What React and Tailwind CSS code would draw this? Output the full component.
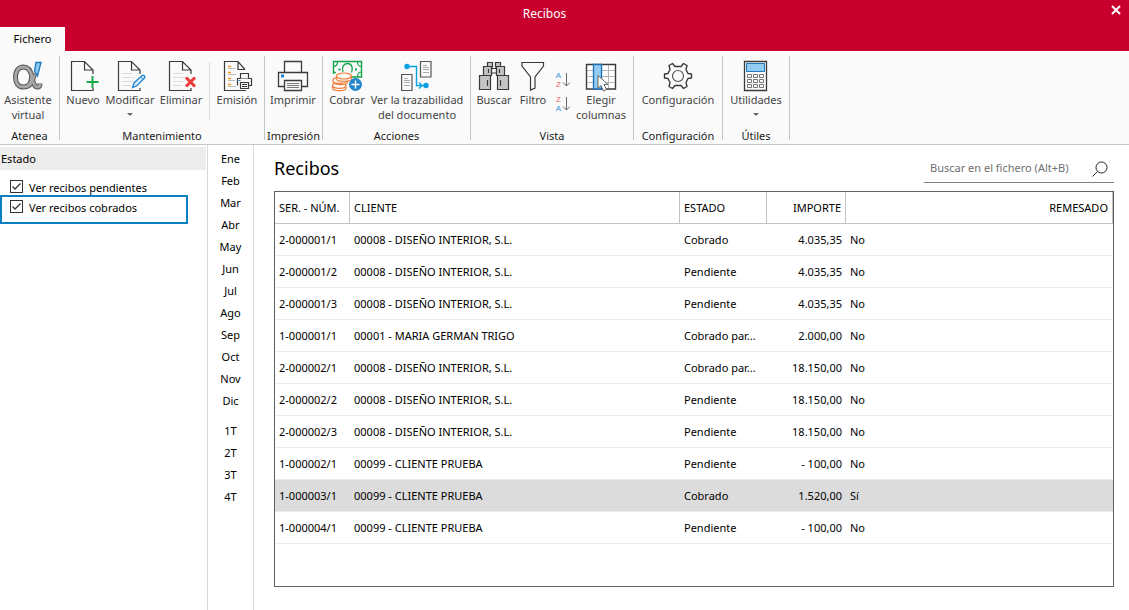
import clsx from "clsx";

const INK = "#3a3a3a";

const MONTHS = ["Ene", "Feb", "Mar", "Abr", "May", "Jun", "Jul", "Ago", "Sep", "Oct", "Nov", "Dic"];
const QUARTERS = ["1T", "2T", "3T", "4T"];

const RECEIPTS = [
  { id: "2-000001/1", client: "00008 - DISEÑO INTERIOR, S.L.", status: "Cobrado", amount: "4.035,35", remitted: "No" },
  { id: "2-000001/2", client: "00008 - DISEÑO INTERIOR, S.L.", status: "Pendiente", amount: "4.035,35", remitted: "No" },
  { id: "2-000001/3", client: "00008 - DISEÑO INTERIOR, S.L.", status: "Pendiente", amount: "4.035,35", remitted: "No" },
  { id: "1-000001/1", client: "00001 - MARIA GERMAN TRIGO", status: "Cobrado par...", amount: "2.000,00", remitted: "No" },
  { id: "2-000002/1", client: "00008 - DISEÑO INTERIOR, S.L.", status: "Cobrado par...", amount: "18.150,00", remitted: "No" },
  { id: "2-000002/2", client: "00008 - DISEÑO INTERIOR, S.L.", status: "Pendiente", amount: "18.150,00", remitted: "No" },
  { id: "2-000002/3", client: "00008 - DISEÑO INTERIOR, S.L.", status: "Pendiente", amount: "18.150,00", remitted: "No" },
  { id: "1-000002/1", client: "00099 - CLIENTE PRUEBA", status: "Pendiente", amount: "- 100,00", remitted: "No" },
  { id: "1-000003/1", client: "00099 - CLIENTE PRUEBA", status: "Cobrado", amount: "1.520,00", remitted: "Sí", selected: true },
  { id: "1-000004/1", client: "00099 - CLIENTE PRUEBA", status: "Pendiente", amount: "- 100,00", remitted: "No" },
];

function Icon({ children }) {
  return (
    <svg viewBox="0 0 32 32" className="size-8 shrink-0" fill="none" stroke={INK} aria-hidden="true">
      {children}
    </svg>
  );
}

function AlphaIcon() {
  const bowl = "M19.5 17C19.5 24 16.500 27 11.500 27C6.500 27 3.500 23 3.500 17.500C3.500 11 6.500 7 11.500 7C17 7 19 12 20 17C21 23 22.500 27 25.500 27C27.500 27 28 25.500 28 23.500";
  const arm = "M23 13C22 19 20 24 17 26";
  return (
    <Icon>
      <path d={bowl} stroke="#555" strokeWidth="5" />
      <path d={arm} stroke="#555" strokeWidth="4" />
      <path d={bowl} stroke="#a6a6a6" strokeWidth="3" />
      <path d={arm} stroke="#a6a6a6" strokeWidth="2" />
      <path d="M24 2.5H29L25.5 16L22.5 11Z" fill="#8ec8f0" stroke="#1f77bd" strokeWidth="1.3" />
    </Icon>
  );
}

// Sheet with a folded corner, left edge at x = 4.5
function Sheet({ lines }) {
  return (
    <>
      {lines && <path d="M8 13.5H18M8 17.5H21M8 21.5H19M8 25.5H17" stroke="#dcdcdc" />}
      <path d="M26 14V10L17.5 1.5H4.5V30.5H26V28M17.5 1.5V10H26" strokeWidth="1.2" />
    </>
  );
}

function NewIcon() {
  return (
    <Icon>
      <Sheet />
      <path d="M25.5 16V28M19.5 22H31.5" stroke="#17a84b" strokeWidth="2" />
    </Icon>
  );
}

function EditIcon() {
  return (
    <Icon>
      <Sheet lines />
      <path d="M18.5 27.5L20 23L28 15.5C29.5 14.5 31.5 16.5 30.5 18L22.5 26Z" fill="#d9eefb" stroke="#2b8bd0" strokeWidth="1.4" />
      <path d="M27 17L29 19.5" stroke="#2b8bd0" />
    </Icon>
  );
}

function DeleteIcon() {
  return (
    <Icon>
      <Sheet lines />
      <path d="M21 17.5L30 26.5M30 17.5L21 26.5" stroke="#ee3a3a" strokeWidth="3" />
    </Icon>
  );
}

function IssueIcon() {
  return (
    <Icon>
      <path d="M24 9.5L17 1.5H3.5V30.5H25M17 1.5V9.5H24" strokeWidth="1.2" />
      <path d="M7 6.5H10M7 12.5H10M7 18.5H10M7 24.5H10" stroke="#f39a1e" strokeWidth="1.3" />
      <path d="M7 8.5H14M7 14.5H15M7 20.5H14M7 26.5H15" stroke="#bdbdbd" />
      <path d="M16.5 25.5V18.5H30.5V25.5H28" fill="#fafafa" strokeWidth="1.2" />
      <path d="M19.5 18.5V13.5H27.5V18.5" fill="#fafafa" strokeWidth="1.2" />
      <path d="M19.5 22.5H27.5V28.5H19.5ZM21 24.5H26M21 26.5H26" fill="#fafafa" strokeWidth="1.2" />
      <path d="M17.5 20.5H19.5" stroke="#1e87cf" />
    </Icon>
  );
}

function PrintIcon() {
  return (
    <Icon>
      <path d="M7.5 12V1.5H24.5V12M7 26.5H1.5V12.5H30.5V26.5H25" strokeWidth="1.3" />
      <path d="M7.5 20.5H24.5V30.5H7.5Z" strokeWidth="1.3" />
      <path d="M10 23.5H22M10 25.5H22M10 27.5H22" stroke="#777" />
      <path d="M4 14.5H7V17.5H4Z" fill="#1e87cf" stroke="none" />
    </Icon>
  );
}

function CollectIcon() {
  return (
    <Icon>
      <path d="M2.5 14V1.5H30.5V17H20" stroke="#12a34a" strokeWidth="1.4" />
      <path
        d="M2.5 6.5C5 6.5 6.5 4.5 6.5 2M26.5 2C26.5 4.5 28 6.5 30.5 6.5M30.5 12C28 12 26.5 14 26.5 17M2.5 11.5L5 13"
        stroke="#12a34a"
        strokeWidth="1.2"
      />
      <path d="M12 12C10.5 7 12.5 3.5 16.5 3.5C20.5 3.5 22.5 7.5 20.5 12.5" stroke="#12a34a" strokeWidth="1.3" />
      <path d="M7.5 9.5H9.5M24 9.5H26" stroke="#12a34a" strokeWidth="2" />
      <g fill="#fafafa" stroke="#ee7d3b" strokeWidth="1.2">
        <path d="M1.5 26V28C1.5 31.5 15 31.5 15 28V26" />
        <ellipse cx="8.2" cy="25.5" rx="6.7" ry="2.8" />
        <path d="M3 20V22C3 25.5 16.5 25.5 16.5 22V20" />
        <ellipse cx="8.5" cy="20.5" rx="6.7" ry="2.8" />
        <path d="M5.5 16V19C5.5 22 20.5 22 20.5 19V16" />
        <ellipse cx="13" cy="16" rx="7.5" ry="3" />
      </g>
      <circle cx="24.5" cy="24.5" r="6.5" fill="#2387cb" stroke="none" />
      <path d="M24.5 20.5V28.5M20.5 24.5H28.5" stroke="#fff" strokeWidth="1.4" />
    </Icon>
  );
}

function TraceIcon() {
  return (
    <Icon>
      <g stroke="#555" strokeWidth="1.2">
        <path d="M19.5 1.5H30V17H19.5ZM0.6 14.5H11V30.5H0.6Z" />
        <path
          d="M22 5.5H26M22 7.5H28M22 9.5H28M22 12.5H28M3 18.5H7M3 20.5H9M3 22.5H9M3 25.5H9"
          stroke="#aaa"
          strokeWidth="1"
        />
      </g>
      <path d="M6 6.5H15.5V25.5H24M18 22.5L21 25.5L18 28.5" stroke="#0a9fe0" strokeWidth="1.4" />
      <circle cx="6" cy="6.5" r="2.7" fill="#0a9fe0" stroke="none" />
      <circle cx="25" cy="25.5" r="2.7" fill="#0a9fe0" stroke="none" />
    </Icon>
  );
}

function BinocularsIcon() {
  return (
    <Icon>
      <g fill="#c4c4c4" strokeWidth="1.2">
        <path d="M9.5 2.5H14.5V7H9.5ZM17.5 2.5H22.5V7H17.5Z" />
        <path d="M13.5 8.5H18.5V13H13.5Z" fill="#fafafa" />
        <path d="M5.5 6.5H13.5V15.5H5.5ZM18.5 6.5H26.5V15.5H18.5Z" />
        <path d="M1.5 15.5H12.5V29.5H1.5ZM19.5 15.5H30.5V29.5H19.5Z" />
      </g>
      <path d="M9.5 20V26M22.5 20V26M10.5 9V13M21.5 9V13" strokeWidth="1.2" />
    </Icon>
  );
}

function FilterIcon() {
  return (
    <Icon>
      <path d="M5 2.5H26.5V6L18 17V28L13.5 30V17L5 6Z" strokeWidth="1.2" />
    </Icon>
  );
}

function ColumnsIcon() {
  return (
    <Icon>
      <path d="M1.5 4.5H30.5V29H1.5Z" fill="#fff" strokeWidth="1.4" />
      <path d="M2 10.5H30M2 16.5H30M2 22.5H30M23.5 5V28" stroke="#b5b5b5" />
      <path d="M8.5 4.5H16.5V29H8.5Z" fill="#92cbf3" stroke="#1f6fb5" strokeWidth="1.3" />
      <path d="M13 15.5V28L16 25.5L18.5 31L21.5 29.5L19 24.5H23Z" fill="#fff" stroke="#666" />
    </Icon>
  );
}

function GearIcon() {
  return (
    <Icon>
      <path
        d="M6 13.5L8 9.5L7 5.5L10.5 3.5L13 6.5H19L21.5 3.5L25 5.5L24 9.5L26 13.5L29.5 14V18L26 18.5L24 22.5L25 26.5L21.5 28.5L19 25.5H13L10.5 28.5L7 26.5L8 22.5L6 18.5L2.5 18V14Z"
        strokeWidth="1.4"
        strokeLinejoin="round"
      />
      <circle cx="16" cy="16" r="5.5" stroke="#555" strokeWidth="1.2" />
    </Icon>
  );
}

function CalculatorIcon() {
  return (
    <Icon>
      <path d="M4.5 1.5H26.5V30.5H4.5Z" strokeWidth="1.3" />
      <path d="M6.5 3.5H24.5V11.5H6.5Z" fill="#92cbf3" stroke="#1f77bd" />
      <path
        d="M7.5 14.5H11.5V17.5H7.5ZM13.5 14.5H17.5V17.5H13.5ZM19.5 14.5H23.5V17.5H19.5ZM7.5 19.5H11.5V22.5H7.5ZM13.5 19.5H17.5V22.5H13.5ZM19.5 19.5H23.5V22.5H19.5ZM7.5 24.5H11.5V27.5H7.5ZM13.5 24.5H17.5V27.5H13.5ZM19.5 24.5H23.5V27.5H19.5Z"
        stroke="#777"
      />
    </Icon>
  );
}

function RibbonGroup({ title, children }) {
  return (
    <section className="flex h-[84px] flex-col justify-between border-r border-[#c6c6c6]">
      <div className="flex">{children}</div>
      <h2 className="text-center text-[11px] leading-2 whitespace-nowrap text-[#1a1a1a]">{title}</h2>
    </section>
  );
}

function RibbonButton({ icon, label, menu, className }) {
  return (
    <button
      type="button"
      className={clsx(
        "flex flex-col items-center pt-1 text-[11px] leading-[15px] whitespace-pre text-[#444]",
        className
      )}
    >
      {icon}
      <span>{label}</span>
      {menu && (
        <svg viewBox="0 0 6 3" className="mt-1.5 h-[3px] w-1.5" fill="#666" aria-hidden="true">
          <path d="M0 0H6L3 3Z" />
        </svg>
      )}
    </button>
  );
}

function SortButton({ first, last, label, flipped }) {
  return (
    <button type="button" aria-label={label} className="flex items-center gap-px">
      <span className="flex flex-col font-['Liberation_Sans',sans-serif] text-[8px] leading-[9px]">
        <span className={flipped ? "text-[#f06464]" : "text-[#3d97d8]"}>{first}</span>
        <span className={flipped ? "text-[#3d97d8]" : "text-[#f06464]"}>{last}</span>
      </span>
      <svg viewBox="0 0 8 16" className="h-4 w-2" fill="none" stroke="#666" aria-hidden="true">
        <path d="M4.5 1V14M1 10.5L4.5 14L8 10.5" />
      </svg>
    </button>
  );
}

function StatusFilter({ label, active }) {
  return (
    <label
      className={clsx(
        "flex items-start gap-1.5 border-2 pt-[3px] pl-2 text-[11px] leading-[15px]",
        active ? "mr-[19px] h-[29px] border-[#0a80c4]" : "h-5 border-transparent"
      )}
    >
      <span className="grid">
        <input
          type="checkbox"
          defaultChecked
          className="peer col-start-1 row-start-1 size-[13px] appearance-none border border-[#333] bg-white"
        />
        <svg
          viewBox="0 0 13 13"
          className="pointer-events-none invisible col-start-1 row-start-1 size-[13px] peer-checked:visible"
          fill="none"
          stroke="#333"
          strokeWidth="1.3"
          aria-hidden="true"
        >
          <path d="M2.5 6.5L5 9L10.5 3.5" />
        </svg>
      </span>
      {label}
    </label>
  );
}

function PeriodButton({ children }) {
  return (
    <button type="button" className="block h-[22px] w-full text-center text-[11px]">
      {children}
    </button>
  );
}

function Ribbon() {
  return (
    <div className="flex border-b border-[#c6c6c6] bg-[#fafafa] pt-[5px] pb-1">
      <RibbonGroup title="Atenea">
        <RibbonButton icon={<AlphaIcon />} label={"Asistente\nvirtual"} className="mr-[3px] w-14" />
      </RibbonGroup>
      <RibbonGroup title="Mantenimiento">
        <RibbonButton icon={<NewIcon />} label="Nuevo" className="w-[46px]" />
        <RibbonButton icon={<EditIcon />} label="Modificar" menu className="w-12" />
        <RibbonButton icon={<DeleteIcon />} label="Eliminar" className="mr-px w-[54px]" />
        <div className="mt-1.5 h-[59px] border-l border-[#dedede]" />
        <RibbonButton icon={<IssueIcon />} label="Emisión" className="w-[54px]" />
      </RibbonGroup>
      <RibbonGroup title="Impresión">
        <RibbonButton icon={<PrintIcon />} label="Imprimir" className="mr-px w-14" />
      </RibbonGroup>
      <RibbonGroup title="Acciones">
        <RibbonButton icon={<CollectIcon />} label="Cobrar" className="mr-px w-12" />
        <RibbonButton icon={<TraceIcon />} label={"Ver la trazabilidad\ndel documento"} className="mr-2 w-[90px]" />
      </RibbonGroup>
      <RibbonGroup title="Vista">
        <RibbonButton icon={<BinocularsIcon />} label="Buscar" className="w-[46px]" />
        <RibbonButton icon={<FilterIcon />} label="Filtro" className="w-8" />
        <div className="flex w-7 flex-col items-center gap-1.5 pt-[15px]">
          <SortButton first="A" last="Z" label="Orden ascendente" />
          <SortButton first="Z" last="A" label="Orden descendente" flipped />
        </div>
        <RibbonButton icon={<ColumnsIcon />} label={"Elegir\ncolumnas"} className="mr-2 w-12" />
      </RibbonGroup>
      <RibbonGroup title="Configuración">
        <RibbonButton icon={<GearIcon />} label="Configuración" className="w-[88px]" />
      </RibbonGroup>
      <RibbonGroup title="Útiles">
        <RibbonButton icon={<CalculatorIcon />} label="Utilidades" menu className="w-[66px]" />
      </RibbonGroup>
    </div>
  );
}

function ReceiptsTable() {
  return (
    <table className="w-full table-fixed border-separate border-spacing-0 text-[11px] leading-4 whitespace-nowrap">
      <colgroup>
        <col className="w-[75px]" />
        <col className="w-[330px]" />
        <col className="w-[87px]" />
        <col className="w-[79px]" />
        <col />
      </colgroup>
      <thead>
        <tr className="h-8 [&>th]:border-r [&>th]:border-b [&>th]:border-[#c3c3c3] [&>th]:px-1 [&>th]:font-normal">
          <th className="text-left">SER. - NÚM.</th>
          <th className="text-left">CLIENTE</th>
          <th className="text-left">ESTADO</th>
          <th className="text-right">IMPORTE</th>
          <th className="text-right">REMESADO</th>
        </tr>
      </thead>
      <tbody>
        {RECEIPTS.map((receipt) => (
          <tr
            key={receipt.id}
            className={clsx(
              "h-8 [&>td]:border-b [&>td]:border-[#ececec] [&>td]:px-1",
              receipt.selected && "bg-[#dcdcdc]"
            )}
          >
            <td>{receipt.id}</td>
            <td>{receipt.client}</td>
            <td>{receipt.status}</td>
            <td className="text-right">{receipt.amount}</td>
            <td>{receipt.remitted}</td>
          </tr>
        ))}
      </tbody>
    </table>
  );
}

export default function App() {
  return (
    <div className="flex min-h-screen flex-col bg-white font-['Noto_Sans','Open_Sans',sans-serif] text-black">
      <header className="bg-[#c8002d] text-white">
        <div className="flex h-[27px] items-center">
          <h1 className="flex-1 text-center text-[12px]">Recibos</h1>
          <button type="button" aria-label="Cerrar" className="flex w-10 justify-center pb-2 pl-3.5">
            <svg viewBox="0 0 10 10" className="size-2.5" stroke="#fff" strokeWidth="2" aria-hidden="true">
              <path d="M1 1L9 9M9 1L1 9" />
            </svg>
          </button>
        </div>
        <button type="button" className="block h-6 w-[65px] bg-[#fafafa] text-[11px] text-black">
          Fichero
        </button>
      </header>

      <Ribbon />

      <div className="flex flex-1">
        <aside className="w-[208px] shrink-0 border-r border-[#dadada] pt-0.5">
          <h2 className="mr-px h-[23px] bg-[#ededed] pl-px text-[11px] leading-6">Estado</h2>
          <div className="pt-[5px]">
            <StatusFilter label="Ver recibos pendientes" />
            <StatusFilter label="Ver recibos cobrados" active />
          </div>
        </aside>

        <nav className="w-[46px] shrink-0 border-r border-[#dadada] pt-[3px]">
          {MONTHS.map((month) => (
            <PeriodButton key={month}>{month}</PeriodButton>
          ))}
          <div className="h-2" />
          {QUARTERS.map((quarter) => (
            <PeriodButton key={quarter}>{quarter}</PeriodButton>
          ))}
        </nav>

        <main className="flex min-w-0 flex-1 flex-col pr-[15px] pb-[23px] pl-5">
          <div className="flex h-[46px] items-start justify-between pt-2">
            <h2 className="text-[18px] leading-[30px]">Recibos</h2>
            <div className="flex h-[30px] w-[190px] items-center border-b border-[#808080] px-1.5 pt-0.5">
              <input
                type="search"
                aria-label="Buscar en el fichero"
                placeholder="Buscar en el fichero (Alt+B)"
                className="min-w-0 flex-1 text-[11px] outline-none placeholder:text-[#707070]"
              />
              <svg viewBox="0 0 16 16" className="size-4" fill="none" stroke="#222" aria-hidden="true">
                <circle cx="9.5" cy="6.5" r="5.5" />
                <path d="M5.5 10.5L0.5 15.5" />
              </svg>
            </div>
          </div>
          <div className="flex-1 border border-[#5f5f5f]">
            <ReceiptsTable />
          </div>
        </main>
      </div>
    </div>
  );
}
